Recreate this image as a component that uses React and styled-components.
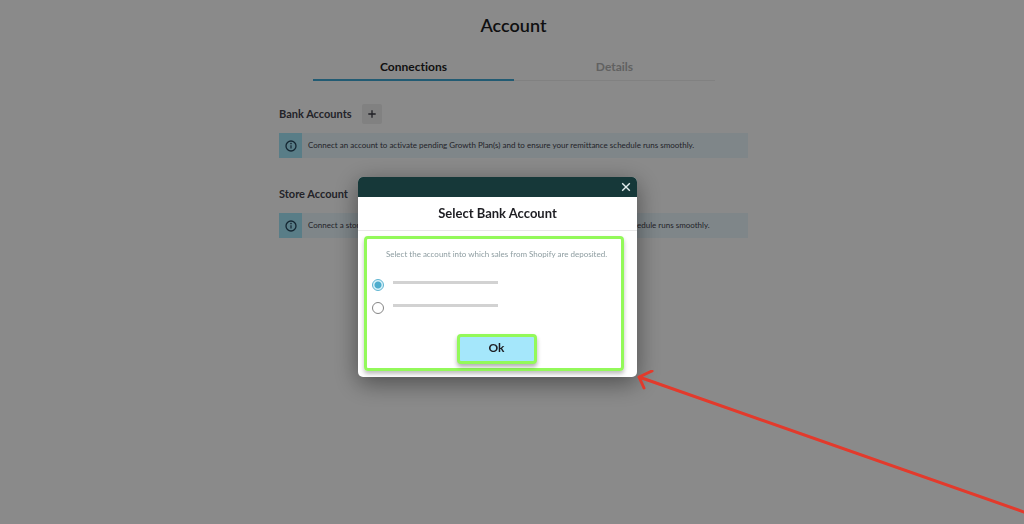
import React, { useState } from "react";
import styled, { createGlobalStyle } from "styled-components";

const tabs = ["Connections", "Details"];

const App = () => {
  const [tab, setTab] = useState("Connections");
  const [open, setOpen] = useState(true);
  const [account, setAccount] = useState("first");

  return (
    <>
      <GlobalStyle />
      <Page>
        <PageTitle>Account</PageTitle>
        <TabList role="tablist">
          {tabs.map((name) => (
            <Tab
              key={name}
              type="button"
              role="tab"
              aria-selected={tab === name}
              $active={tab === name}
              onClick={() => setTab(name)}
            >
              {name}
            </Tab>
          ))}
        </TabList>

        <Section>
          <SectionHeader>
            <SectionTitle>Bank Accounts</SectionTitle>
            <AddButton type="button" aria-label="Add bank account">
              <svg width="8" height="8" viewBox="0 0 8 8" aria-hidden="true">
                <path d="M4 0.3v7.4M0.3 4h7.4" stroke="#3a3a44" strokeWidth="1.3" />
              </svg>
            </AddButton>
          </SectionHeader>
          <Notice>
            Connect an account to activate pending Growth Plan(s) and to ensure your remittance schedule runs smoothly.
          </Notice>
        </Section>

        <Section>
          <SectionHeader>
            <SectionTitle>Store Account</SectionTitle>
          </SectionHeader>
          <Notice>
            Connect a store account to activate pending Growth Plan(s) and to ensure your remittance schedule runs smoothly.
          </Notice>
        </Section>
      </Page>

      {open && (
        <Overlay>
          <Modal role="dialog" aria-labelledby="modal-title">
            <ModalBar>
              <CloseButton type="button" aria-label="Close" onClick={() => setOpen(false)}>
                <svg width="10" height="10" viewBox="0 0 10 10" aria-hidden="true">
                  <path d="M1.2 1.2l7.6 7.6M8.8 1.2L1.2 8.8" stroke="#e4eeee" strokeWidth="1.4" />
                </svg>
              </CloseButton>
            </ModalBar>
            <ModalTitle id="modal-title">Select Bank Account</ModalTitle>
            <ModalBody>
              <Hint>Select the account into which sales from Shopify are deposited.</Hint>
              <Options>
                {["first", "second"].map((id) => (
                  <Option key={id}>
                    <Radio
                      type="radio"
                      name="account"
                      aria-label={`${id} account`}
                      checked={account === id}
                      onChange={() => setAccount(id)}
                    />
                    <OptionLine />
                  </Option>
                ))}
              </Options>
              <OkButton type="button">Ok</OkButton>
            </ModalBody>
          </Modal>
        </Overlay>
      )}

      <Arrow width="387" height="150" viewBox="0 0 387 150" aria-hidden="true">
        <path
          d="M387 142L2 7M15 1L2 7L7 18"
          fill="none"
          stroke="#e23a2c"
          strokeWidth="3"
          strokeLinecap="round"
          strokeLinejoin="round"
        />
      </Arrow>
    </>
  );
};

const Notice = ({ children }) => (
  <NoticeBox>
    <NoticeIcon>
      <svg width="12" height="12" viewBox="0 0 12 12" aria-hidden="true">
        <circle cx="6" cy="6" r="5" fill="none" stroke="#26465c" strokeWidth="1.3" />
        <path d="M6 5.3v3.2" stroke="#26465c" strokeWidth="1.2" />
        <circle cx="6" cy="3.6" r="0.8" fill="#26465c" />
      </svg>
    </NoticeIcon>
    <NoticeText>{children}</NoticeText>
  </NoticeBox>
);

export default App;

const GlobalStyle = createGlobalStyle`
  * {
    box-sizing: border-box;
  }

  body {
    margin: 0;
    background: white;
    font-family: Lato, "Liberation Sans", sans-serif;
    font-variant-ligatures: none;
    color: #1d1d22;
    overflow: hidden;
  }

  button {
    font-family: inherit;
    font-variant-ligatures: inherit;
    color: inherit;
    border: none;
    padding: 0;
    cursor: pointer;
  }
`;

const Page = styled.main`
  width: 100%;
  max-width: 472px;
  margin: 0 auto;
  padding: 13px 0 0 3px;
`;

const PageTitle = styled.h1`
  margin: 0;
  font-size: 18px;
  line-height: 24px;
  font-weight: 600;
  text-align: center;
`;

const TabList = styled.div`
  display: flex;
  margin: 17px 33px 23px 34px;
  border-bottom: 1px solid #eeeeee;
`;

const Tab = styled.button`
  flex: 1;
  height: 27px;
  margin-bottom: -1px;
  background: none;
  border-bottom: 2px solid ${(props) => (props.$active ? "#3fa9d4" : "transparent")};
  font-size: 12px;
  font-weight: 700;
  color: ${(props) => (props.$active ? "#1d1d22" : "#b4b4b4")};
`;

const Section = styled.section`
  margin-bottom: 26px;
`;

const SectionHeader = styled.div`
  display: flex;
  align-items: center;
  gap: 10px;
  height: 20px;
  margin-bottom: 9px;
`;

const SectionTitle = styled.h2`
  margin: 0;
  padding-bottom: 2px;
  font-size: 11px;
  font-weight: 700;
  color: #42424c;
`;

const AddButton = styled.button`
  display: flex;
  align-items: center;
  justify-content: center;
  width: 20px;
  height: 20px;
  border-radius: 2px;
  background: #eeeeee;
`;

const NoticeBox = styled.div`
  display: flex;
  height: 25px;
  background: #eaf8fe;
`;

const NoticeIcon = styled.span`
  display: flex;
  flex-shrink: 0;
  align-items: center;
  justify-content: center;
  width: 23px;
  background: #a5e7f9;
`;

const NoticeText = styled.p`
  margin: 0 6px;
  font-size: 8px;
  line-height: 24px;
  color: #42424c;
  white-space: nowrap;
`;

const Overlay = styled.div`
  position: fixed;
  inset: 0;
  display: flex;
  justify-content: center;
  align-items: flex-start;
  padding: 177px 29px 0 0;
  background: rgba(0, 0, 0, 0.46);
`;

const Modal = styled.div`
  width: 279px;
  border-radius: 5px;
  overflow: hidden;
  background: white;
  box-shadow: 0 6px 24px rgba(0, 0, 0, 0.45);
`;

const ModalBar = styled.div`
  display: flex;
  justify-content: flex-end;
  align-items: center;
  height: 20px;
  padding-right: 6px;
  background: #163839;
`;

const CloseButton = styled.button`
  display: flex;
  background: none;
`;

const ModalTitle = styled.h2`
  margin: 0;
  border-bottom: 1px solid #e8e8e8;
  font-size: 13px;
  line-height: 33px;
  font-weight: 700;
  text-align: center;
`;

const ModalBody = styled.div`
  margin: 5px 13px 6px 6px;
  padding: 10px 0 4px 5px;
  border: 3px solid #93f95a;
  border-radius: 4px;
  box-shadow: 0 3px 4px rgba(0, 0, 0, 0.25);
`;

const Hint = styled.p`
  margin: 0 0 20px;
  font-size: 8px;
  line-height: 10px;
  color: #8d9ca0;
  text-align: center;
  white-space: nowrap;
`;

const Options = styled.div`
  display: flex;
  flex-direction: column;
  gap: 11px;
  margin-bottom: 20px;
`;

const Option = styled.label`
  display: flex;
  align-items: flex-start;
  gap: 9px;
`;

const Radio = styled.input`
  appearance: none;
  width: 12px;
  height: 12px;
  margin: 0;
  border: 1px solid #858585;
  border-radius: 50%;

  &:checked {
    border-color: #5db4d1;
    background: radial-gradient(#4eadcd 0 3px, #d9f2f9 4px);
  }
`;

const OptionLine = styled.span`
  width: 105px;
  height: 3px;
  margin-top: 2px;
  background: #d2d2d2;
`;

const OkButton = styled.button`
  display: block;
  width: 80px;
  height: 30px;
  margin: 0 auto;
  padding-bottom: 4px;
  border: 3px solid #93f95a;
  border-radius: 4px;
  background: #a5e7fb;
  box-shadow: 0 3px 4px rgba(0, 0, 0, 0.3);
  font-size: 12px;
  font-weight: 700;
`;

/* pointer drawn over the page, towards the corner of the dialog */
const Arrow = styled.svg`
  position: fixed;
  left: 637px;
  top: 370px;
  pointer-events: none;
`;
